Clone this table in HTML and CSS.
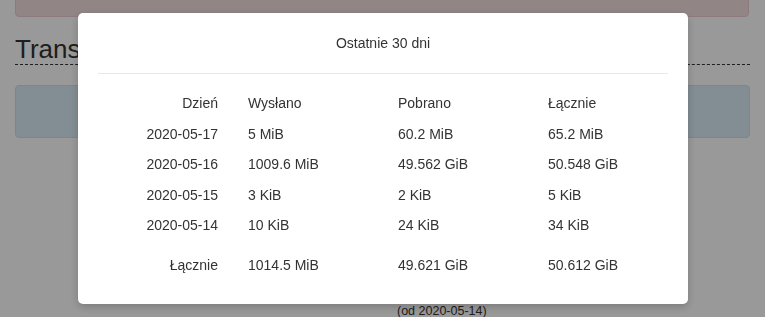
FILE: index.html
```html
<!DOCTYPE html>
<html lang="pl">
<head>
<meta charset="utf-8">
<title>Transfer</title>
<link rel="stylesheet" href="styles.css">
</head>
<body>
<div class="page">
  <div class="alert alert-danger"></div>
  <h2 class="heading">Transfer</h2>
  <div class="alert alert-info"></div>
  <div class="spacer"></div>
  <div class="since">(od 2020-05-14)</div>
</div>
<div class="backdrop"></div>
<div class="modal">
  <div class="modal-header">Ostatnie 30 dni</div>
  <div class="modal-body">
    <div class="stats">
      <div class="cell day head">Dzień</div><div class="cell head">Wysłano</div><div class="cell head">Pobrano</div><div class="cell head">Łącznie</div>
      <div class="cell day">2020-05-17</div><div class="cell">5 MiB</div><div class="cell">60.2 MiB</div><div class="cell">65.2 MiB</div>
      <div class="cell day">2020-05-16</div><div class="cell">1009.6 MiB</div><div class="cell">49.562 GiB</div><div class="cell">50.548 GiB</div>
      <div class="cell day">2020-05-15</div><div class="cell">3 KiB</div><div class="cell">2 KiB</div><div class="cell">5 KiB</div>
      <div class="cell day">2020-05-14</div><div class="cell">10 KiB</div><div class="cell">24 KiB</div><div class="cell">34 KiB</div>
      <div class="cell day total">Łącznie</div><div class="cell total">1014.5 MiB</div><div class="cell total">49.621 GiB</div><div class="cell total">50.612 GiB</div>
    </div>
  </div>
</div>
</body>
</html>
```

FILE: styles.css
```css
* { box-sizing: border-box; }
html, body { margin: 0; padding: 0; }
body {
  font-family: "Liberation Sans", Arial, sans-serif;
  font-size: 14px;
  color: #333;
  background: #fff;
  height: 317px;
  overflow: hidden;
}
.page {
  padding: 0 15px;
  display: flex;
  flex-direction: column;
}
.alert {
  border-radius: 4px;
  border: 1px solid transparent;
}
.alert-danger {
  height: 46px;
  margin-top: -29px;
  background: #f2dede;
  border-color: #ebccd1;
  margin-right: 1px;
}
.heading {
  margin: 18px 0 0;
  font-size: 26px;
  font-weight: 400;
  line-height: 29px;
  color: #333;
  border-bottom: 1px dashed #333;
  padding-bottom: 0;
  height: 30px;
}
.alert-info {
  margin-top: 20px;
  height: 53px;
  background: #d9edf7;
  border-color: #bce8f1;
}
.spacer { height: 165px; }
.since {
  font-size: 12.5px;
  line-height: 16px;
  padding-left: 382px;
}
.backdrop {
  position: fixed;
  inset: 0;
  background: rgba(0, 0, 0, 0.4);
}
.modal {
  position: fixed;
  top: 13px;
  left: 78px;
  width: 610px;
  height: 291px;
  background: #fff;
  border-radius: 5px;
  box-shadow: 0 3px 9px rgba(0, 0, 0, 0.2);
  padding: 0 20px;
}
.modal-header {
  height: 61px;
  padding-top: 21px;
  text-align: center;
  font-size: 14px;
  line-height: 18px;
  border-bottom: 1px solid #e8e8e8;
}
.modal-body {
  padding-top: 14px;
}
.stats {
  display: grid;
  grid-template-columns: 120px 150px 150px 1fr;
  grid-auto-rows: 30.5px;
}
.cell {
  line-height: 30px;
  padding-left: 30px;
  white-space: nowrap;
}
.cell.day {
  padding-left: 0;
  text-align: right;
}
.cell.total {
  margin-top: 9px;
}
```
